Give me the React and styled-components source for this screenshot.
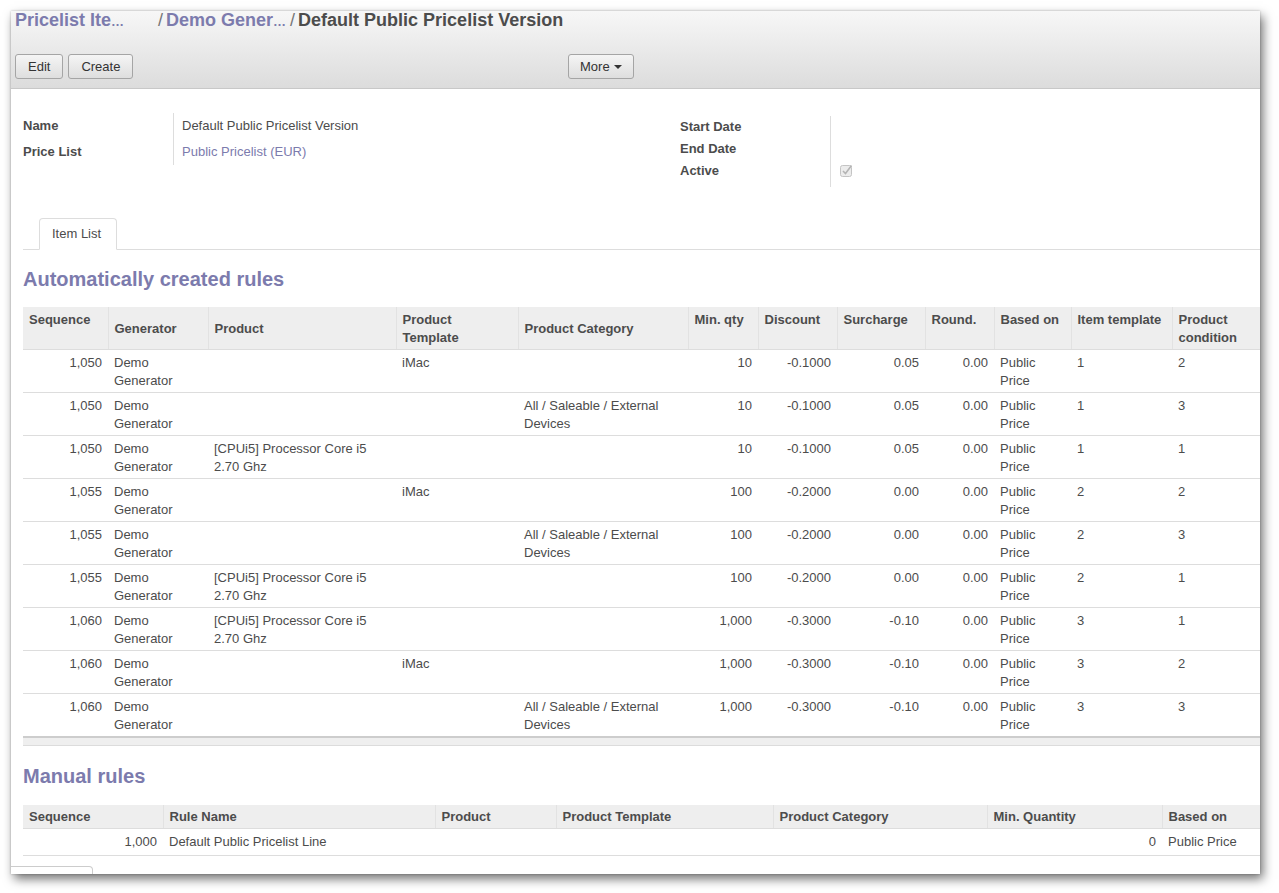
import React from "react";
import styled, { createGlobalStyle } from "styled-components";

const GlobalStyle = createGlobalStyle`
  html, body { margin: 0; padding: 0; background: #ffffff; }
  body {
    font-family: "Liberation Sans", Arial, Helvetica, sans-serif;
    font-size: 13px;
    color: #4c4c4c;
  }
  * { box-sizing: border-box; }
`;

const Page = styled.div`
  padding: 11px 0 0 11px;
  height: 893px;
  overflow: hidden;
`;

const Window = styled.div`
  width: 1249px;
  height: 863px;
  overflow: hidden;
  background: #ffffff;
  box-shadow: 3px 5px 10px rgba(0, 0, 0, 0.55), 0 0 2px rgba(0, 0, 0, 0.25);
  display: flex;
  flex-direction: column;
`;

const Header = styled.header`
  background: linear-gradient(#f7f7f7, #dcdcdc);
  border-bottom: 1px solid #c8c8c8;
  padding: 0 0 9px 4px;
  flex: none;
`;

const Breadcrumb = styled.div`
  height: 18px;
  font-size: 18px;
  font-weight: bold;
  line-height: 18px;
  white-space: nowrap;
  display: flex;
  align-items: flex-start;
  overflow: hidden;
`;

const Crumb = styled.span`
  display: block;
  height: 18px;
  width: ${(p) => (p.$width ? `${p.$width}px` : "auto")};
  color: ${(p) => (p.$current ? "#4c4c4c" : "#7c7bad")};
  overflow: hidden;
`;

const Ellipsis = styled.span`
  font-size: 13px;
  line-height: 0;
`;

const Sep = styled.span`
  display: block;
  color: #777777;
  margin: 0 3px 0 4px;
  font-weight: normal;
`;

const Toolbar = styled.div`
  margin-top: 25px;
  display: grid;
  grid-template-columns: 553px auto;
  justify-content: start;
`;

const ButtonGroup = styled.div`
  display: flex;
  gap: 5px;
`;

const Button = styled.button`
  height: 25px;
  padding: 0 ${(p) => p.$px || 12}px;
  border: 1px solid #a5a5a5;
  border-radius: 3px;
  background: linear-gradient(#f5f5f5, #dedede);
  color: #333333;
  font-family: "Liberation Sans", Arial, sans-serif;
  font-size: 13px;
  line-height: 23px;
  display: inline-flex;
  align-items: center;
  gap: 4px;
  cursor: pointer;
`;

const Caret = styled.span`
  display: inline-block;
  width: 0;
  height: 0;
  border-left: 4px solid transparent;
  border-right: 4px solid transparent;
  border-top: 4px solid #333333;
`;

const Sheet = styled.main`
  flex: 1;
  display: flex;
  flex-direction: column;
`;

const FormGrid = styled.section`
  display: grid;
  grid-template-columns: 657px 1fr;
  padding: 24px 0 0 12px;
  align-items: start;
`;

const Group = styled.div`
  display: grid;
  grid-template-columns: 150px 1fr;
  margin-top: ${(p) => p.$offset || 0}px;
`;

const FieldLabel = styled.div`
  font-weight: bold;
  height: ${(p) => p.$h}px;
  line-height: ${(p) => p.$lh}px;
`;

const FieldValue = styled.div`
  border-left: 1px solid #dddddd;
  padding-left: ${(p) => p.$pl || 8}px;
  padding-top: ${(p) => p.$pt || 0}px;
  height: ${(p) => p.$h}px;
  line-height: ${(p) => p.$lh}px;
`;

const Link = styled.a`
  color: #7c7bad;
  text-decoration: none;
`;

const CheckboxIcon = styled.svg`
  display: block;
  width: 13px;
  height: 13px;
`;

const TabBar = styled.nav`
  margin: 31px 0 0 12px;
  padding-left: 16px;
  border-bottom: 1px solid #dddddd;
  display: flex;
`;

const Tab = styled.div`
  height: 32px;
  margin-bottom: -1px;
  padding: 0 15px 0 12px;
  border: 1px solid #dddddd;
  border-bottom-color: #ffffff;
  border-radius: 4px 4px 0 0;
  background: #ffffff;
  line-height: 30px;
  color: #4c4c4c;
`;

const SectionTitle = styled.h3`
  margin: ${(p) => p.$mt}px 0 ${(p) => p.$mb}px 12px;
  font-size: 20px;
  font-weight: bold;
  line-height: 24px;
  color: #7c7bad;
`;

const Table = styled.table`
  margin-left: 12px;
  width: 1237px;
  border-collapse: collapse;
  table-layout: fixed;
`;

const Col = styled.col`
  width: ${(p) => p.$w}px;
`;

const Th = styled.th`
  background: #eeeeee;
  font-weight: bold;
  text-align: left;
  vertical-align: ${(p) => p.$valign || "top"};
  padding: ${(p) => p.$pt}px 6px ${(p) => p.$pb}px;
  line-height: 17.5px;
  white-space: pre-line;
  border-bottom: 1px solid #dddddd;
  border-left: 1px solid #e2e2e2;
  &:first-child { border-left: none; }
`;

const Td = styled.td`
  padding: ${(p) => p.$pt}px 6px ${(p) => p.$pb}px;
  line-height: 17.5px;
  border-top: 1px solid #dddddd;
  text-align: ${(p) => (p.$num ? "right" : "left")};
  vertical-align: top;
`;

const BodyRow = styled.tr`
  &:last-child td { border-bottom: ${(p) => (p.$closed ? "1px solid #dddddd" : "none")}; }
`;

const FootCell = styled.td`
  height: 8px;
  padding: 0;
  background: #efefef;
  border-top: 2px solid #cdcdcd;
  border-bottom: 1px solid #dcdcdc;
`;

const BottomStub = styled.div`
  margin-top: 10px;
  width: 82px;
  height: 20px;
  border: 1px solid #cccccc;
  border-left: none;
  border-radius: 0 4px 0 0;
  flex: none;
`;

const autoCols = [
  { label: "Sequence", w: 85, num: true, valign: "top" },
  { label: "Generator", w: 100, valign: "middle" },
  { label: "Product", w: 188, valign: "middle" },
  { label: "Product\nTemplate", w: 122, valign: "top" },
  { label: "Product Category", w: 170, valign: "middle" },
  { label: "Min. qty", w: 70, num: true, valign: "top" },
  { label: "Discount", w: 79, num: true, valign: "top" },
  { label: "Surcharge", w: 88, num: true, valign: "top" },
  { label: "Round.", w: 69, num: true, valign: "top" },
  { label: "Based on", w: 77, valign: "top" },
  { label: "Item template", w: 101, valign: "top" },
  { label: "Product\ncondition", w: 88, valign: "top" },
];

const CPU = "[CPUi5] Processor Core i5 2.70 Ghz";
const CAT = "All / Saleable / External Devices";

const autoRows = [
  ["1,050", "Demo Generator", "", "iMac", "", "10", "-0.1000", "0.05", "0.00", "Public Price", "1", "2"],
  ["1,050", "Demo Generator", "", "", CAT, "10", "-0.1000", "0.05", "0.00", "Public Price", "1", "3"],
  ["1,050", "Demo Generator", CPU, "", "", "10", "-0.1000", "0.05", "0.00", "Public Price", "1", "1"],
  ["1,055", "Demo Generator", "", "iMac", "", "100", "-0.2000", "0.00", "0.00", "Public Price", "2", "2"],
  ["1,055", "Demo Generator", "", "", CAT, "100", "-0.2000", "0.00", "0.00", "Public Price", "2", "3"],
  ["1,055", "Demo Generator", CPU, "", "", "100", "-0.2000", "0.00", "0.00", "Public Price", "2", "1"],
  ["1,060", "Demo Generator", CPU, "", "", "1,000", "-0.3000", "-0.10", "0.00", "Public Price", "3", "1"],
  ["1,060", "Demo Generator", "", "iMac", "", "1,000", "-0.3000", "-0.10", "0.00", "Public Price", "3", "2"],
  ["1,060", "Demo Generator", "", "", CAT, "1,000", "-0.3000", "-0.10", "0.00", "Public Price", "3", "3"],
];

const manualCols = [
  { label: "Sequence", w: 140, num: true },
  { label: "Rule Name", w: 272 },
  { label: "Product", w: 121 },
  { label: "Product Template", w: 217 },
  { label: "Product Category", w: 214 },
  { label: "Min. Quantity", w: 175, num: true },
  { label: "Based on", w: 98 },
];

const manualRows = [["1,000", "Default Public Pricelist Line", "", "", "", "0", "Public Price"]];

function DataTable({ cols, rows, thPt, thPb, tdPt, tdPb, footer }) {
  return (
    <Table>
      <colgroup>
        {cols.map((c, i) => (
          <Col key={i} $w={c.w} />
        ))}
      </colgroup>
      <thead>
        <tr>
          {cols.map((c, i) => (
            <Th key={i} $valign={c.valign} $pt={thPt} $pb={thPb}>
              {c.label}
            </Th>
          ))}
        </tr>
      </thead>
      <tbody>
        {rows.map((r, ri) => (
          <BodyRow key={ri} $closed={!footer}>
            {r.map((v, ci) => (
              <Td key={ci} $num={cols[ci].num} $pt={tdPt} $pb={tdPb}>
                {v}
              </Td>
            ))}
          </BodyRow>
        ))}
      </tbody>
      {footer && (
        <tfoot>
          <tr>
            <FootCell colSpan={cols.length} />
          </tr>
        </tfoot>
      )}
    </Table>
  );
}

function DisabledCheck() {
  return (
    <CheckboxIcon viewBox="0 0 13 13">
      <rect x="0.5" y="1.5" width="11" height="11" rx="2" fill="#ececec" stroke="#c4c4c4" />
      <path d="M3 7 L5.5 9.5 L11.5 1.5" fill="none" stroke="#b4b4b4" strokeWidth="1.6" />
    </CheckboxIcon>
  );
}

export default function App() {
  return (
    <>
      <GlobalStyle />
      <Page>
        <Window>
          <Header>
            <Breadcrumb>
              <Crumb $width={139}>
                Pricelist Ite<Ellipsis>…</Ellipsis>
              </Crumb>
              <Sep>/</Sep>
              <Crumb>
                Demo Gener<Ellipsis>…</Ellipsis>
              </Crumb>
              <Sep>/</Sep>
              <Crumb $current>Default Public Pricelist Version</Crumb>
            </Breadcrumb>
            <Toolbar>
              <ButtonGroup>
                <Button>Edit</Button>
                <Button>Create</Button>
              </ButtonGroup>
              <ButtonGroup>
                <Button $px={11}>
                  More <Caret />
                </Button>
              </ButtonGroup>
            </Toolbar>
          </Header>
          <Sheet>
            <FormGrid>
              <Group>
                <FieldLabel $h={26} $lh={26}>Name</FieldLabel>
                <FieldValue $h={26} $lh={26}>Default Public Pricelist Version</FieldValue>
                <FieldLabel $h={26} $lh={26}>Price List</FieldLabel>
                <FieldValue $h={26} $lh={26}>
                  <Link href="#">Public Pricelist (EUR)</Link>
                </FieldValue>
              </Group>
              <Group $offset={3}>
                <FieldLabel $h={22} $lh={22}>Start Date</FieldLabel>
                <FieldValue $h={22} $lh={22} $pl={9} />
                <FieldLabel $h={22} $lh={22}>End Date</FieldLabel>
                <FieldValue $h={22} $lh={22} $pl={9} />
                <FieldLabel $h={27} $lh={22}>Active</FieldLabel>
                <FieldValue $h={27} $lh={22} $pl={9} $pt={4}>
                  <DisabledCheck />
                </FieldValue>
              </Group>
            </FormGrid>
            <TabBar>
              <Tab>Item List</Tab>
            </TabBar>
            <SectionTitle $mt={17} $mb={16}>Automatically created rules</SectionTitle>
            <DataTable cols={autoCols} rows={autoRows} thPt={4} thPb={3} tdPt={4} tdPb={3} footer />
            <SectionTitle $mt={18} $mb={17}>Manual rules</SectionTitle>
            <DataTable cols={manualCols} rows={manualRows} thPt={3} thPb={3} tdPt={4} tdPb={4} />
            <BottomStub />
          </Sheet>
        </Window>
      </Page>
    </>
  );
}
